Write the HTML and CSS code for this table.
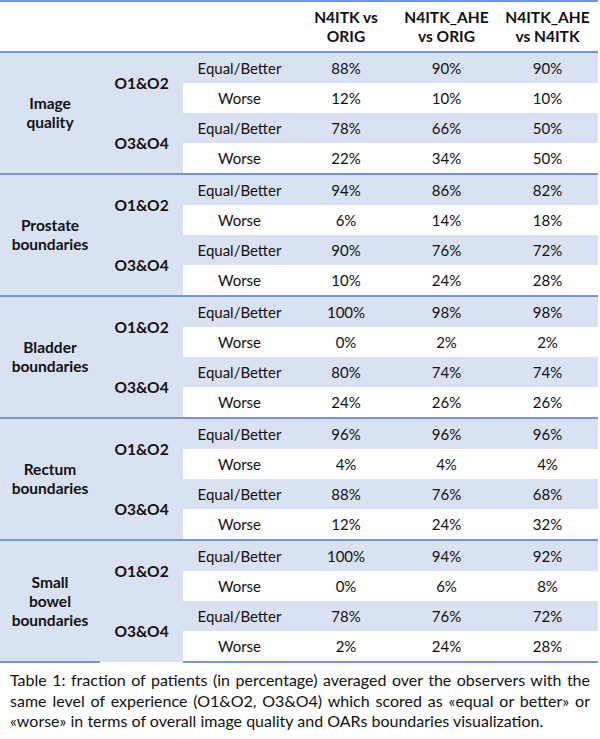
FILE: index.html
```html
<!DOCTYPE html>
<html>
<head>
<meta charset="utf-8">
<link rel="stylesheet" href="styles.css">
</head>
<body>
<table class="res">
  <colgroup>
    <col class="c1"><col class="c2"><col class="c3"><col class="c4"><col class="c5"><col class="c6">
  </colgroup>
  <thead>
    <tr class="head">
      <th></th><th></th><th></th>
      <th>N4ITK vs<br>ORIG</th>
      <th>N4ITK_AHE<br>vs ORIG</th>
      <th>N4ITK_AHE<br>vs N4ITK</th>
    </tr>
  </thead>
  <tbody class="grp">
    <tr class="sh a"><td rowspan="4" class="lab">Image<br>quality</td><td rowspan="2" class="obs">O1&amp;O2</td><td>Equal/Better</td><td>88%</td><td>90%</td><td>90%</td></tr>
    <tr class="b"><td>Worse</td><td>12%</td><td>10%</td><td>10%</td></tr>
    <tr class="sh a"><td rowspan="2" class="obs">O3&amp;O4</td><td>Equal/Better</td><td>78%</td><td>66%</td><td>50%</td></tr>
    <tr class="b"><td>Worse</td><td>22%</td><td>34%</td><td>50%</td></tr>
  </tbody>
  <tbody class="grp">
    <tr class="sh a"><td rowspan="4" class="lab">Prostate<br>boundaries</td><td rowspan="2" class="obs">O1&amp;O2</td><td>Equal/Better</td><td>94%</td><td>86%</td><td>82%</td></tr>
    <tr class="b"><td>Worse</td><td>6%</td><td>14%</td><td>18%</td></tr>
    <tr class="sh a"><td rowspan="2" class="obs">O3&amp;O4</td><td>Equal/Better</td><td>90%</td><td>76%</td><td>72%</td></tr>
    <tr class="b"><td>Worse</td><td>10%</td><td>24%</td><td>28%</td></tr>
  </tbody>
  <tbody class="grp">
    <tr class="sh a"><td rowspan="4" class="lab">Bladder<br>boundaries</td><td rowspan="2" class="obs">O1&amp;O2</td><td>Equal/Better</td><td>100%</td><td>98%</td><td>98%</td></tr>
    <tr class="b"><td>Worse</td><td>0%</td><td>2%</td><td>2%</td></tr>
    <tr class="sh a"><td rowspan="2" class="obs">O3&amp;O4</td><td>Equal/Better</td><td>80%</td><td>74%</td><td>74%</td></tr>
    <tr class="b"><td>Worse</td><td>24%</td><td>26%</td><td>26%</td></tr>
  </tbody>
  <tbody class="grp">
    <tr class="sh a"><td rowspan="4" class="lab">Rectum<br>boundaries</td><td rowspan="2" class="obs">O1&amp;O2</td><td>Equal/Better</td><td>96%</td><td>96%</td><td>96%</td></tr>
    <tr class="b"><td>Worse</td><td>4%</td><td>4%</td><td>4%</td></tr>
    <tr class="sh a"><td rowspan="2" class="obs">O3&amp;O4</td><td>Equal/Better</td><td>88%</td><td>76%</td><td>68%</td></tr>
    <tr class="b"><td>Worse</td><td>12%</td><td>24%</td><td>32%</td></tr>
  </tbody>
  <tbody class="grp last">
    <tr class="sh a"><td rowspan="4" class="lab">Small<br>bowel<br>boundaries</td><td rowspan="2" class="obs">O1&amp;O2</td><td>Equal/Better</td><td>100%</td><td>94%</td><td>92%</td></tr>
    <tr class="b"><td>Worse</td><td>0%</td><td>6%</td><td>8%</td></tr>
    <tr class="sh a"><td rowspan="2" class="obs">O3&amp;O4</td><td>Equal/Better</td><td>78%</td><td>76%</td><td>72%</td></tr>
    <tr class="b"><td>Worse</td><td>2%</td><td>24%</td><td>28%</td></tr>
  </tbody>
</table>
<p class="caption">Table 1: fraction of patients (in percentage) averaged over the observers with the same level of experience (O1&amp;O2, O3&amp;O4) which scored as «equal or better» or «worse» in terms of overall image quality and OARs boundaries visualization.</p>
</body>
</html>
```

FILE: styles.css
```css
html, body {
  margin: 0;
  padding: 0;
  background: #ffffff;
}
body {
  font-family: "Lato", "Open Sans", sans-serif;
  font-size: 15px;
  color: #111111;
}
.res {
  width: 598px;
  border-collapse: collapse;
  table-layout: fixed;
  margin-top: 0;
}
.c1 { width: 100px; }
.c2 { width: 83px; }
.c3 { width: 113px; }
.c4 { width: 100px; }
.c5 { width: 101px; }
.c6 { width: 101px; }
.res th, .res td {
  padding: 0;
  text-align: center;
  vertical-align: middle;
  line-height: 19px;
}
.head th {
  height: 49px;
  font-weight: 700;
  font-size: 15.5px;
  border-top: 2px solid #7696d5;
  border-bottom: 2px solid #7696d5;
}
.grp tr:first-child td {
  border-top: 2px solid #7696d5;
}
.grp.last tr:last-child td {
  border-bottom: 2px solid #7696d5;
}
.grp.last td.lab, .grp.last td.obs:last-of-type {
  border-bottom: 2px solid #7696d5;
}
.a td { height: 30px; }
.b td { height: 30px; }
.sh td, td.lab, td.obs {
  background: #d9e2f3;
}
td.lab, td.obs {
  font-weight: 700;
  font-size: 15.5px;
}
.caption {
  margin: 7px 10px 0 10px;
  text-align: justify;
  line-height: 20.5px;
  font-size: 16px;
}
```
